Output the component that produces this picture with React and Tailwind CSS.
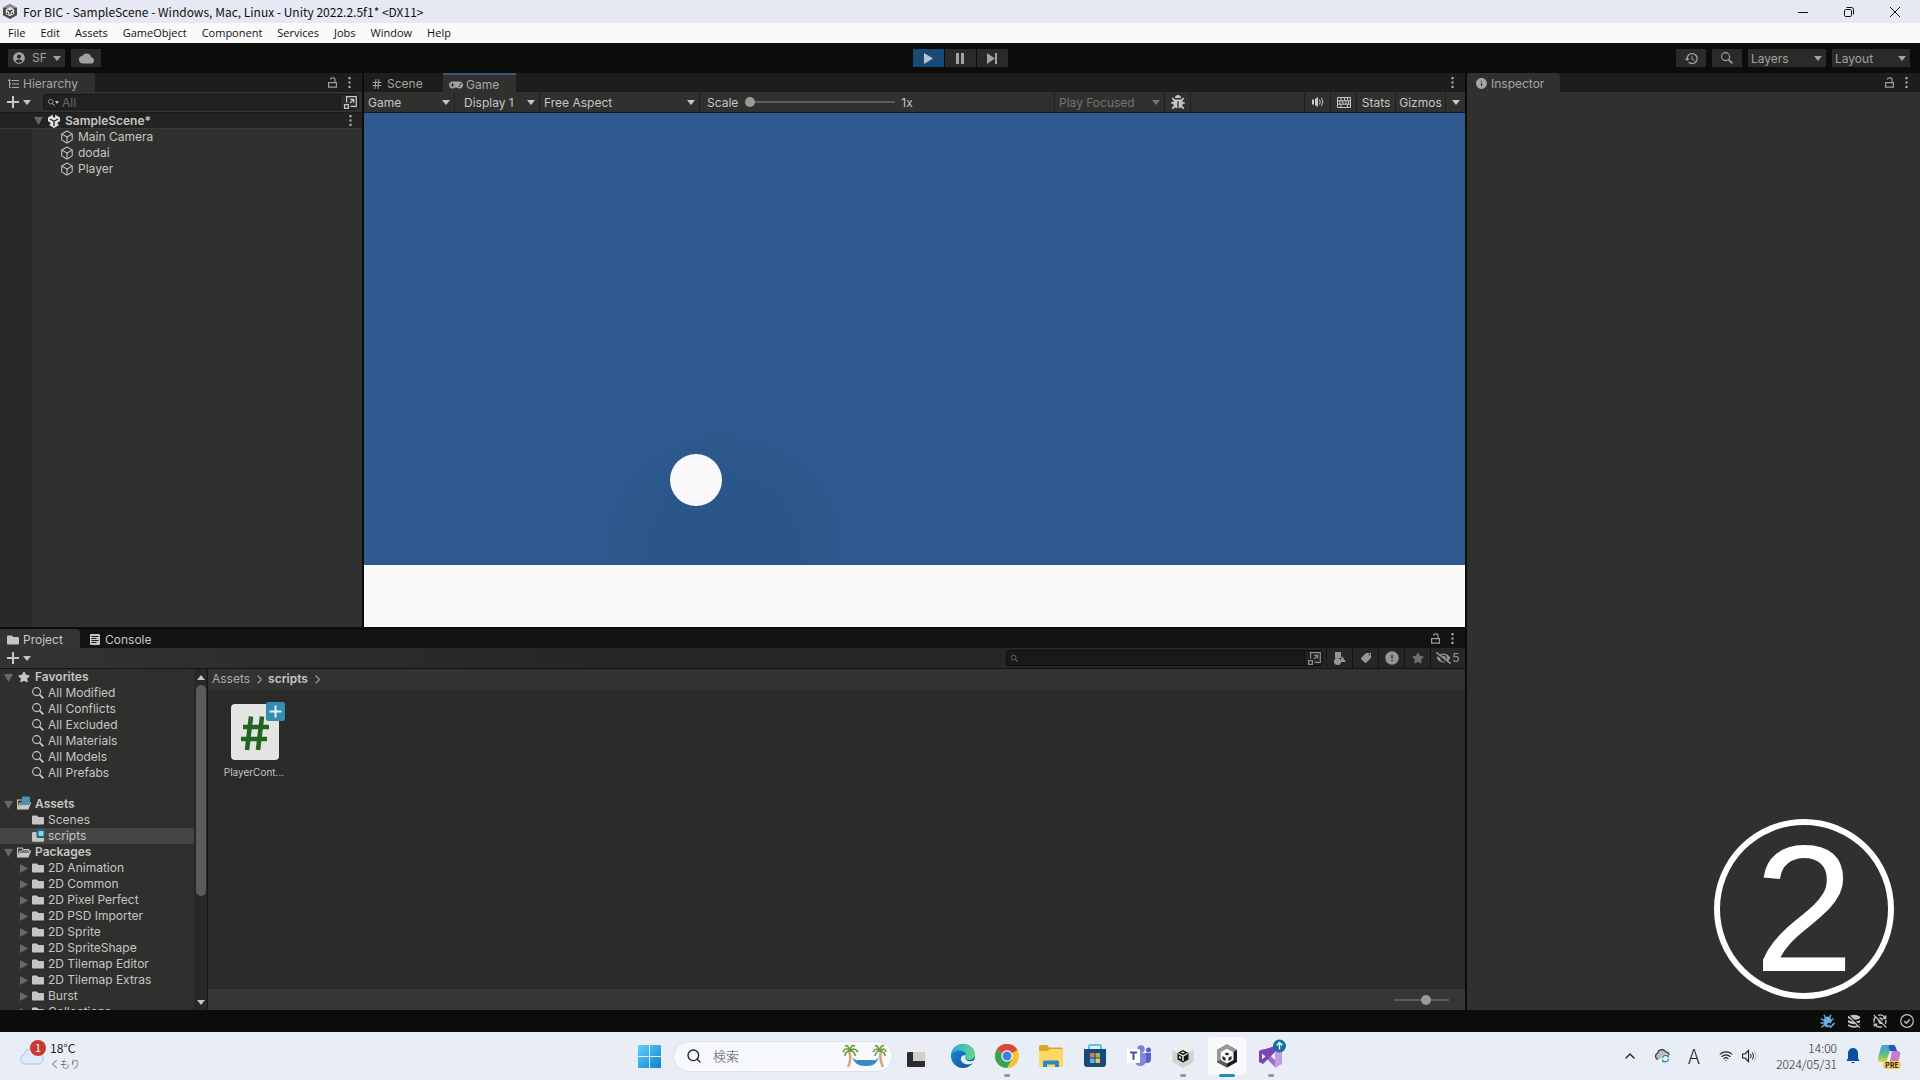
import { FaBug, FaEyeSlash, FaFolder, FaGamepad, FaStar } from 'react-icons/fa'
import { MdAccountCircle, MdCloud, MdError, MdHistory, MdInfo, MdLocalOffer } from 'react-icons/md'
import { Box, ChevronUp, Hash, Search, Wifi } from 'lucide-react'

const menus = ['File', 'Edit', 'Assets', 'GameObject', 'Component', 'Services', 'Jobs', 'Window', 'Help']
const sceneObjects = ['Main Camera', 'dodai', 'Player']
const favorites = ['All Modified', 'All Conflicts', 'All Excluded', 'All Materials', 'All Models', 'All Prefabs']
const packages = [
  '2D Animation',
  '2D Common',
  '2D Pixel Perfect',
  '2D PSD Importer',
  '2D Sprite',
  '2D SpriteShape',
  '2D Tilemap Editor',
  '2D Tilemap Extras',
  'Burst',
  'Collections',
]

function Caret({ className = '' }) {
  return (
    <svg className={`shrink-0 w-2 h-[5px] ${className}`} viewBox="0 0 8 5" fill="currentColor">
      <path d="M0 0h8L4 5z" />
    </svg>
  )
}

function Foldout({ open }) {
  return (
    <svg className="shrink-0 w-[9px] h-[9px] text-[#686866]" viewBox="0 0 9 9" fill="currentColor">
      <path d={open ? 'M0 1h9L4.500 9z' : 'M1 0v9l8-4.500z'} />
    </svg>
  )
}

function Kebab() {
  return (
    <button aria-label="Panel menu" className="w-3 h-4 flex items-center justify-center text-[#b4b4b2]">
      <svg className="w-[3px] h-[11px]" viewBox="0 0 3 11" fill="currentColor">
        <path d="M.5 0h2v2.200h-2zM.5 4.400h2v2.200h-2zM.5 8.800h2V11h-2z" />
      </svg>
    </button>
  )
}

function LockButton() {
  return (
    <button aria-label="Lock panel" className="w-3 h-4 flex items-center justify-center text-[#9c9c9a]">
      <svg className="w-[9px] h-[11px]" viewBox="0 0 9 11" fill="none" stroke="currentColor" strokeWidth="1.200">
        <path d="M.6 5.600h7.800v4.600H.6zM7 5.500V2.600C7 .4 2.600.2 2.400 2.600" />
      </svg>
    </button>
  )
}

function PopoutIcon() {
  return (
    <svg className="w-[13px] h-[13px]" viewBox="0 0 13 13" fill="none" stroke="currentColor" strokeWidth="1.200">
      <path d="M2.600 6.500V.7h9.700v9.700H6.500M.6 8.600h3.800v3.800H.6zM6 7l3.500-3.500M6.200 3.300h3.500v3.500" />
    </svg>
  )
}

function UnityLogo() {
  return (
    <svg className="w-[14px] h-[14px] ml-1 mr-1" viewBox="0 0 14 14">
      <path d="M7 0l6 3.400v7.200L7 14l-6-3.400V3.400z" fill="#e2e2e0" />
      <path d="M7 7.300V12M7 7.300L3 5M7 7.300L11 5" stroke="#232322" strokeWidth="1.300" />
      <path d="M5.800 0h2.400v3L7 3.800 5.800 3zM0 9.200l1-2 2.400 1.200v1.700L1.500 11.500zM14 9.200l-1-2-2.400 1.200v1.700l1.900 1.400z" fill="#232322" />
    </svg>
  )
}

function HierarchyIcon() {
  return (
    <svg className="w-[11px] h-[10px]" viewBox="0 0 11 10" fill="none" stroke="currentColor">
      <path d="M0 1.500h2.500M3.500 1.500H11M4 5H11M4 8.500H11M1.500 0v8.500h1.500M1.500 5H3" />
    </svg>
  )
}

function ConsoleIcon() {
  return (
    <svg className="w-[10px] h-[11px]" viewBox="0 0 10 11">
      <rect width="10" height="11" rx="1" fill="#c4c4c2" />
      <path d="M1.500 2.500h7M1.500 4.500h5M1.500 6.500h7M1.500 8.500h5" stroke="#1c1c1b" />
    </svg>
  )
}

function MagnifierIcon({ className = 'w-3 h-3' }) {
  return (
    <svg className={`shrink-0 ${className}`} viewBox="0 0 12 12" fill="none" stroke="currentColor">
      <circle cx="4.600" cy="4.600" r="4" strokeWidth="1.100" />
      <path d="M7.600 7.600l3.800 3.800" strokeWidth="1.700" />
    </svg>
  )
}

function OpenFolder({ badge }) {
  return (
    <svg className="shrink-0 w-[14px] h-3 overflow-visible" viewBox="0 0 14 12">
      <path d="M.6 11V2h4.500l1 1.500h5.500V5M.6 11L3.200 5h10.200L11 11z" fill="none" stroke="#c6c6c4" strokeWidth="1.200" />
      <path d="M3.500 6.500h9.300L11 11H1z" fill="#c6c6c4" />
      {badge && <rect x="5" y="-1.500" width="8" height="8" rx="1" fill="#4796ab" />}
    </svg>
  )
}

function BadgedFolder() {
  return (
    <svg className="shrink-0 w-3 h-3 overflow-visible" viewBox="0 0 12 12">
      <path d="M0 3.500Q0 2 1 2h3.500L6 3.500h6V11q0 .8-1 .8H1q-1 0-1-.8z" fill="#c6c6c4" />
      <rect x="4.500" y="-1" width="8.500" height="9" rx="1" fill="#24667d" />
      <rect x="6.500" y="1" width="5" height="5" rx="1" fill="#8fd3e2" />
    </svg>
  )
}

function Tab({ icon, label, className }) {
  return (
    <button className={`h-full flex items-center gap-1 pt-[2px] ${className}`}>
      <span className="w-3 flex justify-center">{icon}</span>
      {label}
    </button>
  )
}

function Picker({ label, className, selectClass = 'pl-1' }) {
  return (
    <div className={`h-full flex items-center relative ${className}`}>
      <select aria-label={label} className={`appearance-none bg-transparent w-full h-full pt-px outline-none ${selectClass}`}>
        <option>{label}</option>
      </select>
      <Caret className="absolute right-1 pointer-events-none" />
    </div>
  )
}

const sliderLook =
  'appearance-none bg-transparent [&::-webkit-slider-runnable-track]:h-[2px] [&::-webkit-slider-runnable-track]:bg-[#5c5c5a] [&::-webkit-slider-thumb]:appearance-none [&::-webkit-slider-thumb]:w-[10px] [&::-webkit-slider-thumb]:h-[10px] [&::-webkit-slider-thumb]:-mt-1 [&::-webkit-slider-thumb]:rounded-full [&::-webkit-slider-thumb]:bg-[#999997]'

function TitleBar() {
  return (
    <header className="text-[#101014] shrink-0">
      <div className="h-[23px] pr-[2px] bg-[#e6e8f3] flex items-center">
        <svg className="w-[14px] h-[15px] ml-[3px] mr-[6px]" viewBox="0 0 14 15">
          <path d="M7 0l7 3.700v7.600L7 15l-7-3.700V3.700z" fill="#4a4a4c" />
          <path d="M7 0l7 3.700L7 4.500 0 3.700z" fill="#8b8b8e" />
          <path d="M7 3L11.200 5.300v4.600L7 12.300 2.800 9.900V5.300z" fill="#e2e2e5" />
          <path d="M7 7.500v3M7 7.500L4.500 6M7 7.500L9.500 6M4.500 8.500v1.500M9.500 8.500v1.500" stroke="#2b2b2c" strokeWidth="1.200" />
        </svg>
        <h1 className="font-['Noto_Sans_CJK_JP',sans-serif]">
          For BIC - SampleScene - Windows, Mac, Linux - Unity 2022.2.5f1* &lt;DX11&gt;
        </h1>
        <div className="ml-auto flex items-center">
          <button aria-label="Minimize" className="w-[46px] h-5 flex items-center justify-center">
            <svg className="w-[10px] h-[10px]" viewBox="0 0 10 10" stroke="currentColor"><path d="M0 5.500h10" /></svg>
          </button>
          <button aria-label="Restore" className="w-[46px] h-5 flex items-center justify-center">
            <svg className="w-[10px] h-[10px]" viewBox="0 0 10 10" fill="none" stroke="currentColor">
              <rect x=".5" y="2.500" width="7" height="7" rx="1.200" />
              <path d="M2.500.5H7.500q2 0 2 2v5" />
            </svg>
          </button>
          <button aria-label="Close" className="w-[46px] h-5 flex items-center justify-center">
            <svg className="w-[10px] h-[10px]" viewBox="0 0 10 10" stroke="currentColor"><path d="M0 0l10 10M10 0L0 10" /></svg>
          </button>
        </div>
      </div>
      <nav className="h-5 bg-[#fafafa] flex items-center gap-[15px] pl-2 font-['Open_Sans',sans-serif] text-[11px]">
        {menus.map((name) => <button key={name}>{name}</button>)}
      </nav>
    </header>
  )
}

function MainToolbar() {
  return (
    <div className="h-[30px] shrink-0 bg-[#0c0c0a] grid grid-cols-[1fr_auto_1fr] items-center text-[#a2a2a0]">
      <div className="flex gap-[6px] pl-2">
        <button className="h-[18px] w-[57px] bg-[#2a2a29] flex items-center justify-between px-1">
          <MdAccountCircle className="w-[14px] h-[14px]" />
          SF
          <Caret />
        </button>
        <button aria-label="Cloud" className="h-[18px] w-[30px] bg-[#2a2a29] flex items-center justify-center">
          <MdCloud className="w-[15px] h-[15px]" />
        </button>
      </div>
      <div className="flex gap-px">
        <button aria-label="Play" className="w-[31px] h-[18px] bg-[#184a76] flex items-center justify-center">
          <svg className="w-[9px] h-[11px] text-[#b8c4ce]" viewBox="0 0 9 11" fill="currentColor"><path d="M0 0l9 5.500L0 11z" /></svg>
        </button>
        <button aria-label="Pause" className="w-[31px] h-[18px] bg-[#2a2a29] flex items-center justify-center">
          <svg className="w-2 h-[11px]" viewBox="0 0 8 11" fill="currentColor"><path d="M0 0h3v11H0zM5 0h3v11H5z" /></svg>
        </button>
        <button aria-label="Step" className="w-[31px] h-[18px] bg-[#2a2a29] flex items-center justify-center">
          <svg className="w-[10px] h-[11px]" viewBox="0 0 10 11" fill="currentColor"><path d="M0 0l8 5.500L0 11zM8 0h2v11H8z" /></svg>
        </button>
      </div>
      <div className="flex gap-[6px] justify-end pr-[10px]">
        <button aria-label="History" className="w-[30px] h-[18px] bg-[#2a2a29] flex items-center justify-center">
          <MdHistory className="w-[15px] h-[15px]" />
        </button>
        <button aria-label="Search" className="w-[30px] h-[18px] bg-[#2a2a29] flex items-center justify-center">
          <MagnifierIcon />
        </button>
        <div className="h-[18px] w-[78px] bg-[#2a2a29]"><Picker label="Layers" className="w-full" selectClass="pl-[3px]" /></div>
        <div className="h-[18px] w-[78px] bg-[#2a2a29]"><Picker label="Layout" className="w-full" selectClass="pl-[3px]" /></div>
      </div>
    </div>
  )
}

function Hierarchy() {
  return (
    <section className="w-[362px] shrink-0 flex flex-col bg-[#30302f]">
      <div className="h-[19px] bg-[#1d1d1b] flex items-center">
        <Tab icon={<HierarchyIcon />} label="Hierarchy" className="w-[95px] pl-[7px] bg-[#30302f] rounded-tr-sm text-[#a6a6a4]" />
        <div className="ml-auto flex gap-[5px] pr-[7px]"><LockButton /><Kebab /></div>
      </div>
      <div className="h-[21px] border-b border-[#1c1c1b] flex items-center pl-[7px] pr-[3px]">
        <button aria-label="Add object" className="flex items-center gap-1 mr-3">
          <svg className="w-3 h-3" viewBox="0 0 12 12" stroke="currentColor" strokeWidth="2"><path d="M6 0v12M0 6h12" /></svg>
          <Caret />
        </button>
        <div className="h-4 flex-1 min-w-0 bg-[#212120] border border-[#161615] rounded-[3px] flex items-center pl-1">
          <MagnifierIcon className="w-[7px] h-[7px]" />
          <svg className="w-1 h-[3px]" viewBox="0 0 4 3" fill="currentColor"><path d="M0 0h4L2 3z" /></svg>
          <input aria-label="Search hierarchy" placeholder="All" className="flex-1 min-w-0 h-full pl-[3px] bg-transparent outline-none placeholder:text-[#686866]" />
          <button aria-label="Open in search" className="pl-[3px] pr-px border-l border-[#161615] bg-[#2c2c2b] h-full flex items-center"><PopoutIcon /></button>
        </div>
      </div>
      <div className="flex-1 bg-linear-to-r from-[#292928] from-[32px] to-[#30302f] to-[32px]">
        <div className="h-4 bg-[#232322] border-b border-[#3a3a39] flex items-center pl-[34px] pr-[6px] font-semibold">
          <Foldout open />
          <UnityLogo />
          SampleScene*
          <div className="ml-auto"><Kebab /></div>
        </div>
        <ul>
          {sceneObjects.map((name) => (
            <li key={name} className="h-4 flex items-center gap-1 pl-[60px]">
              <Box className="w-[14px] h-[14px]" strokeWidth={1.8} />
              {name}
            </li>
          ))}
        </ul>
      </div>
    </section>
  )
}

function GameView() {
  return (
    <section className="flex-1 min-w-0 flex flex-col bg-[#30302f]">
      <div className="h-[19px] bg-[#1d1d1b] flex items-center text-[#a6a6a4]">
        <Tab icon={<Hash className="w-3 h-3" />} label="Scene" className="w-[79px] pl-[7px]" />
        <Tab icon={<FaGamepad className="w-[14px] h-[14px] shrink-0" />} label="Game" className="w-[73px] pl-[7px] bg-[#30302f] border-t-2 border-[#38587c]" />
        <div className="ml-auto pr-[7px]"><Kebab /></div>
      </div>
      <div className="h-[21px] border-b border-[#101a28] flex items-center">
        <Picker label="Game" className="w-[91px] border-r border-[#20201f]" />
        <Picker label="Display 1" className="w-[85px] border-r border-[#20201f]" selectClass="pl-[9px]" />
        <Picker label="Free Aspect" className="w-[160px] border-r border-[#20201f]" />
        <label htmlFor="scale" className="px-[7px] pt-px">Scale</label>
        <input id="scale" type="range" min="1" max="10" defaultValue="1" className={`w-[150px] ${sliderLook}`} />
        <span className="pl-[6px] pt-px">1x</span>
        <div className="ml-auto h-full flex items-center">
          <Picker label="Play Focused" className="w-[111px] border-x border-[#20201f] text-[#737371]" />
          <button aria-label="Debug" className="w-[26px] h-full border-r border-[#20201f] flex items-center justify-center">
            <FaBug className="w-[14px] h-[14px]" />
          </button>
          <div className="w-[113px]" />
          <button aria-label="Mute audio" className="w-[26px] h-full border-l border-[#20201f] flex items-center justify-center">
            <svg className="w-3 h-[10px]" viewBox="0 0 12 10">
              <path d="M0 2.500h2v5H0zM3 2l3-2v10L3 8z" fill="currentColor" />
              <path d="M7.500 2.500q1.500 2.500 0 5M9.500 1q2.600 4 0 8" fill="none" stroke="currentColor" />
            </svg>
          </button>
          <button aria-label="Shortcuts" className="w-[26px] h-full border-l border-[#20201f] flex items-center justify-center">
            <svg className="w-[14px] h-[11px]" viewBox="0 0 14 11" fill="none" stroke="currentColor">
              <path d="M.5.5h13v10H.5zM.5 3.800h13M.5 7.200h13M4 .5v3.300M7.500.5v3.300M10.500.5v3.300M2.800 3.800v3.400M5.800 3.800v3.400M9 3.800v3.400M11.500 3.800v3.400M4 7.200v3.300M10.500 7.200v3.300" />
            </svg>
          </button>
          <button className="w-[39px] h-full pt-px border-l border-[#20201f]">Stats</button>
          <button className="w-[51px] h-full pt-px border-x border-[#20201f]">Gizmos</button>
          <button aria-label="Gizmo options" className="w-[19px] h-full flex items-center justify-center"><Caret /></button>
        </div>
      </div>
      <div className="flex-1 flex flex-col justify-end relative bg-[#305a8f] bg-[radial-gradient(circle_at_360px_440px,#285486_0px,#2b568a_70px,#305a8f_140px)]">
        <div className="absolute left-[306px] bottom-[121px] w-[52px] h-[52px] rounded-full bg-[#f9f9fb]" />
        <div className="h-[62px] bg-[#f9f9fa]" />
      </div>
    </section>
  )
}

function TreeScrollbar() {
  return (
    <div className="w-[13px] shrink-0 bg-[#272726] flex flex-col items-center">
      <button aria-label="Scroll up" className="h-4 flex items-center"><Caret className="rotate-180" /></button>
      <div className="w-[10px] h-[211px] rounded-full bg-[#5b5b5a]" />
      <button aria-label="Scroll down" className="h-4 mt-auto flex items-center"><Caret /></button>
    </div>
  )
}

function ProjectTree() {
  return (
    <div className="flex w-[208px] shrink-0 border-r border-[#151514]">
      <ul className="flex-1 min-w-0 overflow-hidden whitespace-nowrap">
        <li className="h-4 flex items-center pl-1 gap-[5px] font-semibold">
          <Foldout open />
          <FaStar className="w-3 h-3" />
          Favorites
        </li>
        {favorites.map((name) => (
          <li key={name} className="h-4 flex items-center gap-1 pl-8"><MagnifierIcon />{name}</li>
        ))}
        <li className="h-[15px]" />
        <li className="h-4 flex items-center pl-1 gap-[4px] font-semibold"><Foldout open /><OpenFolder badge />Assets</li>
        <li className="h-4 flex items-center gap-1 pl-8"><FaFolder className="w-3 h-3" />Scenes</li>
        <li className="h-4 flex items-center gap-1 pl-8 bg-[#454544]"><BadgedFolder />scripts</li>
        <li className="h-4 flex items-center pl-1 gap-[4px] font-semibold"><Foldout open /><OpenFolder />Packages</li>
        {packages.map((name) => (
          <li key={name} className="h-4 flex items-center gap-1 pl-[19px]">
            <Foldout />
            <FaFolder className="w-3 h-3" />
            {name}
          </li>
        ))}
      </ul>
      <TreeScrollbar />
    </div>
  )
}

function Crumb({ label, className = '' }) {
  return (
    <a href="#" className={`flex items-center gap-[7px] ${className}`}>
      {label}
      <svg className="w-[5px] h-[9px] text-[#8c8c8a]" viewBox="0 0 5 9" fill="none" stroke="currentColor" strokeWidth="1.500"><path d="M.5.5l4 4-4 4" /></svg>
    </a>
  )
}

function Project() {
  const filters = [
    {
      name: 'Filter by type',
      icon: (
        <svg className="w-3 h-[13px]" viewBox="0 0 12 13" fill="currentColor">
          <path d="M1 0h6v6H1zM8 4l4 6H6z" />
          <circle cx="3.500" cy="9.500" r="3.500" />
        </svg>
      ),
    },
    { name: 'Filter by label', icon: <MdLocalOffer className="w-3 h-3 rotate-90" /> },
    { name: 'Filter by log', icon: <MdError className="w-4 h-4" /> },
    { name: 'Save search', icon: <FaStar className="w-3 h-3 text-[#6f6f6d]" /> },
  ]

  return (
    <section className="h-[381px] shrink-0 flex flex-col bg-[#2f2f2e]">
      <div className="h-[19px] shrink-0 bg-[#131313] flex items-center">
        <Tab icon={<FaFolder className="w-3 h-3" />} label="Project" className="w-20 pl-[7px] bg-[#333332] rounded-tr-sm" />
        <Tab icon={<ConsoleIcon />} label="Console" className="pl-[9px]" />
        <div className="ml-auto flex gap-[5px] pr-[7px]"><LockButton /><Kebab /></div>
      </div>
      <div className="h-[21px] shrink-0 border-b border-[#131312] bg-linear-to-r from-[#333332] to-[#262626] to-40% flex items-center pl-[7px]">
        <button aria-label="Create asset" className="flex items-center gap-1">
          <svg className="w-3 h-3" viewBox="0 0 12 12" stroke="currentColor" strokeWidth="2"><path d="M6 0v12M0 6h12" /></svg>
          <Caret />
        </button>
        <div className="ml-auto mr-[3px] h-4 w-[317px] bg-[#191919] border border-[#0e0e0e] rounded-[3px] flex items-center pl-1 text-[#8c8c8a]">
          <MagnifierIcon className="w-[7px] h-[7px]" />
          <input aria-label="Search assets" className="flex-1 min-w-0 h-full pl-1 bg-transparent outline-none" />
          <button aria-label="Open in search" className="pl-[3px] pr-px border-l border-[#0e0e0e] bg-[#222] h-full flex items-center"><PopoutIcon /></button>
        </div>
        <div className="h-full flex text-[#969694]">
          {filters.map((filter) => (
            <button key={filter.name} aria-label={filter.name} className="w-[26px] border-l border-[#151515] flex items-center justify-center">
              {filter.icon}
            </button>
          ))}
          <button aria-label="Hidden packages" className="w-[35px] border-l border-[#151515] flex items-center justify-center gap-px">
            <FaEyeSlash className="w-[15px] h-3" />5
          </button>
        </div>
      </div>
      <div className="flex-1 min-h-0 flex">
        <ProjectTree />
        <div className="flex-1 min-w-0 flex flex-col bg-[#2a2a29]">
          <nav className="h-[21px] pb-px bg-[#323232] flex items-center gap-[6px] pl-1">
            <Crumb label="Assets" className="text-[#acacaa]" />
            <Crumb label="scripts" className="font-semibold" />
          </nav>
          <div className="flex-1 px-[15px] pt-[12px]">
            <figure className="w-[62px] flex flex-col items-center gap-1">
              <svg className="w-[54px] h-[58px] ml-2" viewBox="0 0 54 58">
                <rect x="0" y="2" width="48" height="56" rx="4" fill="#e4e4e2" />
                <path d="M20 14.500l-4 33.500M31 14.500L27 48M12 25h26M10 37h26" stroke="#21651f" strokeWidth="4.600" />
                <rect x="35" y="0" width="19" height="19" rx="2" fill="#338daf" />
                <path d="M44.500 3.500v12M38.500 9.500h12" stroke="#e6f2f6" strokeWidth="2" />
              </svg>
              <figcaption className="text-[10px] leading-4">PlayerCont...</figcaption>
            </figure>
          </div>
          <div className="h-[21px] bg-[#363635] flex items-center justify-end pr-4">
            <input aria-label="Icon size" type="range" defaultValue="60" className={`w-[55px] ${sliderLook}`} />
          </div>
        </div>
      </div>
    </section>
  )
}

function Inspector() {
  return (
    <section className="w-[453px] shrink-0 flex flex-col bg-[#30302e]">
      <div className="h-[19px] bg-[#1d1d1b] flex items-center">
        <Tab icon={<MdInfo className="w-[13px] h-[13px] shrink-0" />} label="Inspector" className="w-[93px] pl-[8px] bg-[#30302e] rounded-t-sm text-[#a6a6a4]" />
        <div className="ml-auto flex gap-[5px] pr-2"><LockButton /><Kebab /></div>
      </div>
      <div className="flex-1 flex items-end justify-end pr-[26px] pb-[11px]">
        <div className="w-[180px] h-[180px] rounded-full border-6 border-white text-white flex items-center justify-center font-['Liberation_Sans',sans-serif] text-[180px] leading-none">
          2
        </div>
      </div>
    </section>
  )
}

function StatusBar() {
  return (
    <div className="h-[22px] shrink-0 bg-[#0c0c0b] flex items-center justify-end text-[#c2c2c0]">
      <button aria-label="Debugger" className="w-[26px] flex justify-center text-[#6aaee6]">
        <svg className="w-[15px] h-[15px]" viewBox="0 0 15 15" fill="none" stroke="currentColor">
          <path d="M5 3.500q2.500-2 5 0l2 3.500-1.500 2.500-2-1L7 10.500 9 13q-3 1-5-1.500-1.500-4 1-8z" fill="currentColor" stroke="none" />
          <path d="M5.500 4L4 .8M9.500 4L11 .8M4 6.500L1 4.500M3.500 9H.5M4 11l-2.500 2.500M11 6.500l2.500-2" strokeWidth="1.400" />
          <path d="M8.500 11l2 2.200L14.500 9" strokeWidth="1.600" />
        </svg>
      </button>
      <button aria-label="Cache server" className="w-[27px] flex justify-center">
        <svg className="w-[14px] h-[14px]" viewBox="0 0 14 14">
          <path d="M1 2.500Q7-1 13 2.500v1.700Q7 7.500 1 4.200zM1 6q6 3.500 12 0v2.500q-6 3.500-12 0zM1 10.200q6 3.500 12 0v1.800q-6 3.500-12 0z" fill="currentColor" />
          <path d="M2.500 2l11 11" stroke="#0c0c0b" strokeWidth="1.300" />
          <path d="M1.500 2.500l11.500 11.500" stroke="currentColor" strokeWidth="1.100" />
        </svg>
      </button>
      <button aria-label="Auto refresh" className="w-[26px] flex justify-center">
        <svg className="w-[14px] h-[14px]" viewBox="0 0 14 14" fill="none" stroke="currentColor" strokeWidth="1.400">
          <path d="M1.200 8.500A6 6 0 0 1 2.500 3M5 1.300a6 6 0 0 1 7.300 3.200M12.900 6a6 6 0 0 1-1.400 5M9 12.700A6 6 0 0 1 2 10.500M12.700 1.500v3H9.700M1.300 12.500v-2.300h3" />
          <path d="M4.500 6a2.600 2.600 0 1 1 4.600 1.600V10H6.500z" fill="currentColor" stroke="none" />
          <path d="M1.800.5l12 12" stroke="#0c0c0b" />
          <path d="M.8 1l12.500 12.500" strokeWidth="1.200" />
        </svg>
      </button>
      <button aria-label="Progress" className="w-[27px] flex justify-center">
        <svg className="w-[14px] h-[14px]" viewBox="0 0 14 14" fill="none" stroke="currentColor" strokeWidth="1.200">
          <circle cx="7" cy="7" r="6.300" />
          <path d="M4.300 7.200l2 2 3.500-3.800" strokeWidth="1.500" />
        </svg>
      </button>
    </div>
  )
}

function TaskIcon({ label, mark, active, children }) {
  return (
    <button aria-label={label} className="w-11 h-12 flex items-center justify-center relative">
      <span className={`w-[38px] h-[38px] rounded flex items-center justify-center ${active ? 'bg-[#f8f9fc]' : ''}`}>{children}</span>
      {mark && <span className={`absolute bottom-[3px] h-[3px] rounded-full ${active ? 'w-4 bg-[#2786c8]' : 'w-[6px] bg-[#909398]'}`} />}
    </button>
  )
}

function Taskbar() {
  return (
    <footer className="h-12 shrink-0 bg-[#e9edf5] grid grid-cols-[1fr_auto_1fr] items-center font-['Noto_Sans_CJK_JP',sans-serif] text-[12px] leading-4 text-[#1f2023]">
      <button className="flex items-center gap-1 pl-[18px] text-left justify-self-start">
        <svg className="w-[28px] h-[32px]" viewBox="0 0 28 32">
          <path d="M6 24a5 5 0 0 1 0-9.500 7 7 0 0 1 13-1.500 5.500 5.500 0 0 1 1.500 11z" fill="#dfeaf8" stroke="#a9c4e6" />
          <circle cx="20" cy="8" r="8" fill="#c83c30" />
          <text x="20" y="12" textAnchor="middle" fontSize="11" fill="#fff">1</text>
        </svg>
        <span>
          18°C
          <span className="block text-[10px] font-light text-[#3f4146]">くもり</span>
        </span>
      </button>
      <div className="flex items-center">
        <TaskIcon label="Start">
          <svg className="w-[23px] h-[23px]" viewBox="0 0 23 23">
            <linearGradient id="win" x1="0" y1="0" x2="1" y2="1"><stop stopColor="#5fd2f8" /><stop offset="1" stopColor="#0d7fd0" /></linearGradient>
            <path d="M1 0h10v11H0V1q0-1 1-1zM12 0h10q1 0 1 1v10H12zM0 12h11v11H1q-1 0-1-1zM12 12h11v10q0 1-1 1H12z" fill="url(#win)" />
          </svg>
        </TaskIcon>
        <label className="ml-[2px] mr-1 w-[220px] h-[31px] rounded-full bg-[#f7f9fc] border border-[#dde1e9] flex items-center gap-[11px] pl-3 pr-1">
          <Search className="w-4 h-4 shrink-0" />
          <input aria-label="検索" placeholder="検索" className="flex-1 min-w-0 bg-transparent outline-none text-[13px] font-light placeholder:text-[#505257]" />
          <svg className="w-[46px] h-[24px] shrink-0" viewBox="0 0 46 24" fill="none">
            <path d="M7 7q3 8-1 16M39 7q-2 8 2 16" stroke="#d3a678" strokeWidth="2.500" />
            <path d="M8 7Q4 2 1 8M8 7Q6 0 3 2M8 7q1-7 5-5M8 7q5-4 8 1M8 7q5 0 5 5M8 7q-5 0-5 5M38 7q-4-4-7 1M38 7q-2-6-5-5M38 7q1-7 4-5M38 7q5-4 6 1M38 7q5 1 5 5M38 7q-4 0-5 5" stroke="#6f9c3c" strokeWidth="1.700" />
            <path d="M10 13q3 4 6 3h15q4 1 6-4-2 11-14 10-10 0-13-9z" fill="#3b86c8" />
          </svg>
        </label>
        <TaskIcon label="Task view">
          <svg className="w-6 h-6" viewBox="0 0 24 24">
            <rect x="0" y="8" width="18" height="15" rx="1" fill="#2c2c2e" />
            <rect x="6" y="1" width="18" height="16" rx="1" fill="#ededed" fillOpacity=".92" />
            <path d="M6 8h12v9H6z" fill="#cfcfcf" />
          </svg>
        </TaskIcon>
        <TaskIcon label="Edge">
          <svg className="w-6 h-6" viewBox="0 0 24 24">
            <linearGradient id="edgeTop" x1="0" x2="1"><stop stopColor="#2ba8e2" /><stop offset="1" stopColor="#66d984" /></linearGradient>
            <linearGradient id="edgeLow" x1="0" y1="0" x2="1" y2="1"><stop stopColor="#1b8fe0" /><stop offset="1" stopColor="#0d4c94" /></linearGradient>
            <circle cx="12" cy="12" r="12" fill="url(#edgeLow)" />
            <path d="M0 11C1 4 6 0 12 0c7 0 12 5 12 10 0 4-3 6-6 6-3 0-4-1.500-4-2.500 0-1 1-1 1-2.500C15 8.500 12 6.500 8.500 6.500 4.500 6.500 1.500 8 0 11z" fill="url(#edgeTop)" />
            <path d="M14 13.500c0 2 2 3.700 5 3.700 1.700 0 3-.5 3.800-1L24 15v5l-2-1c-2 1.500-8 2.500-11-1-2-2.500-1-5.500 1-6.500 1-.5 3-.4 3 0 0 1-1 1-1 2z" fill="#e9edf5" />
          </svg>
        </TaskIcon>
        <TaskIcon label="Chrome" mark>
          <svg className="w-6 h-6" viewBox="0 0 24 24">
            <circle cx="12" cy="12" r="12" fill="#f6c631" />
            <path d="M12 12L1.600 6A12 12 0 0 1 22.400 6z" fill="#da4a3c" />
            <path d="M1.600 6A12 12 0 0 0 12 24l5.200-9z" fill="#35a456" />
            <path d="M1.600 6A12 12 0 0 1 22.400 6H12z" fill="#da4a3c" />
            <circle cx="12" cy="12" r="5.700" fill="#fff" />
            <circle cx="12" cy="12" r="4.500" fill="#3f7fe0" />
          </svg>
        </TaskIcon>
        <TaskIcon label="Explorer">
          <svg className="w-6 h-[22px]" viewBox="0 0 24 22">
            <path d="M0 2q0-2 2-2h6l2 2.500h12q2 0 2 2V8H0z" fill="#e0a526" />
            <path d="M0 6h9l2-2h12q1 0 1 1v15q0 2-2 2H2q-2 0-2-2z" fill="#fbd964" />
            <path d="M4 22v-5q0-1.500 1.500-1.500h13Q20 15.500 20 17v5h-4v-2.500H8V22z" fill="#2c87c9" />
          </svg>
        </TaskIcon>
        <TaskIcon label="Store">
          <svg className="w-6 h-6" viewBox="0 0 24 24">
            <path d="M6 6V2.500Q6 1 7.500 1h9Q18 1 18 2.500V6" fill="none" stroke="#5cc3e8" strokeWidth="2" />
            <path d="M1 5h22v15q0 3-3 3H4q-3 0-3-3z" fill="#164a7c" />
            <path d="M7 9h4.500v4.500H7z" fill="#e8715a" /><path d="M12.500 9H17v4.500h-4.500z" fill="#93c159" />
            <path d="M7 14.500h4.500V19H7z" fill="#5ab6e6" /><path d="M12.500 14.500H17V19h-4.500z" fill="#f2c64d" />
          </svg>
        </TaskIcon>
        <TaskIcon label="Teams">
          <svg className="w-[26px] h-6" viewBox="0 0 26 24">
            <circle cx="15" cy="5" r="3.700" fill="#7a80d8" /><circle cx="22.500" cy="6" r="2.500" fill="#5a61c4" />
            <path d="M18 9h7v6q0 4-4 4h-3z" fill="#5a61c4" />
            <path d="M9 9h11v7q0 6-6 6-5 0-5-6z" fill="#8287dc" />
            <rect x="1" y="5" width="13" height="14" rx="1" fill="#fff" />
            <path d="M4 8.500h7M7.500 8.500V16" stroke="#4b50a8" strokeWidth="2" />
          </svg>
        </TaskIcon>
        <TaskIcon label="Unity Hub" mark>
          <svg className="w-[22px] h-[24px]" viewBox="0 0 22 24">
            <path d="M11 0l10.500 6v12L11 24 .5 18V6z" fill="#d2d2d2" />
            <path d="M11 0l10.500 6L11 12 .5 6z" fill="#efefef" />
            <path d="M11 6l5.500 3v6.500L11 18.500l-5.500-3V9z" fill="#161616" />
            <path d="M11 12v5M11 12L6.500 9.500M11 12l4.500-2.500" stroke="#efefef" strokeWidth="1.400" />
            <path d="M7 12l2 1v2L7 14zM11 7.500l2 1-2 1-2-1z" fill="#efefef" />
          </svg>
        </TaskIcon>
        <TaskIcon label="Unity" mark active>
          <svg className="w-[22px] h-6" viewBox="0 0 22 24">
            <path d="M11 .5l10 5.500v12l-10 5.500L1 18V6z" fill="#1c1c1c" />
            <path d="M11 .5L21 6l-3.500 2L11 4.500 4.500 8v8L1 18V6z" fill="#9a9a9a" />
            <path d="M1 18l3.500-2 6.500 3.500v4z" fill="#5d5d5d" />
            <path d="M11 4.500L17.500 8v8L11 19.500 4.500 16V8z" fill="#f6f6f6" />
            <path d="M11 11.500l-2.500-1.500L11 8.500l2.500 1.500zM6.500 12l3 1.700V17l-3-1.700zM15.500 12l-3 1.700V17l3-1.700z" fill="#242424" />
          </svg>
        </TaskIcon>
        <TaskIcon label="Visual Studio" mark>
          <svg className="w-[28px] h-[28px] overflow-visible" viewBox="0 0 28 28">
            <path d="M2 9l4-2 14 13-2 5z" fill="#9b6bd0" />
            <path d="M2 9v11l4 2L20 8l-2-4z" fill="#7546b4" />
            <path d="M5 11.500l3.500 3-3.500 3z" fill="#e9edf5" />
            <path d="M18 4l7 3v15l-7 4z" fill="#c29ae8" />
            <circle cx="22.500" cy="4" r="6.500" fill="#17709f" />
            <path d="M22.500 7.500v-7M19.800 3.200L22.500.5l2.700 2.700" fill="none" stroke="#fff" strokeWidth="1.400" />
          </svg>
        </TaskIcon>
      </div>
      <div className="flex items-center justify-end pr-[19px]">
        <button aria-label="Hidden icons" className="w-8 flex justify-center"><ChevronUp className="w-4 h-4" strokeWidth={2} /></button>
        <button aria-label="OneDrive" className="w-8 flex justify-center">
          <svg className="w-4 h-[14px]" viewBox="0 0 16 14" fill="none">
            <path d="M4 10.500A3.500 3.500 0 0 1 3.500 4a4.500 4.500 0 0 1 8-1.500A4 4 0 0 1 15 6" fill="#b9bbbd" stroke="#303236" strokeWidth="1.200" />
            <circle cx="11.500" cy="9.500" r="4.500" fill="#e9edf5" />
            <path d="M8.500 9a3 3 0 0 1 5.500-1.300V6M14.500 10A3 3 0 0 1 9 11.500V13.300" stroke="#1f7fae" strokeWidth="1.200" />
          </svg>
        </button>
        <button className="w-8 text-[20px] leading-6 font-light">A</button>
        <button aria-label="Network" className="w-8 flex justify-center"><Wifi className="w-[14px] h-[14px]" strokeWidth={2} /></button>
        <button aria-label="Volume" className="w-4 flex justify-center">
          <svg className="w-4 h-[14px]" viewBox="0 0 16 14" fill="none" stroke="currentColor">
            <path d="M.5 5h2.500L6.500 1.500v11L3 9H.5z" strokeWidth="1.200" />
            <path d="M8.500 5q1.200 2 0 4M10.500 3.500q2 3.500 0 7" />
            <path d="M12.500 2q3 5 0 10" stroke="#b9bec8" />
          </svg>
        </button>
        <button className="w-[79px] text-right font-light">
          14:00
          <span className="block">2024/05/31</span>
        </button>
        <button aria-label="Notifications" className="w-8 flex justify-center">
          <svg className="w-[14px] h-4" viewBox="0 0 14 16" fill="#0a4fa5"><path d="M7 0a5 5 0 0 1 5 5v5l1.500 3H.5L2 10V5a5 5 0 0 1 5-5zM5 14h4q-2 2.500-4 0z" /></svg>
        </button>
        <button aria-label="Copilot preview" className="ml-2 w-6 h-[26px] relative">
          <svg className="w-6 h-6" viewBox="0 0 24 24">
            <linearGradient id="copA" x1="0" y1="0" x2="0" y2="1"><stop stopColor="#37a0e8" /><stop offset=".6" stopColor="#63c37a" /><stop offset="1" stopColor="#f0cf45" /></linearGradient>
            <linearGradient id="copB" x1="0" y1="0" x2="0" y2="1"><stop stopColor="#b57be8" /><stop offset="1" stopColor="#ee7a8c" /></linearGradient>
            <path d="M6 1h10q2 0 2.500 2L20 7h-7L9 18H4q-4 0-3-4L4 3q.5-2 2-2z" fill="url(#copA)" />
            <path d="M12 1h4q2 0 2.500 2L20 7h-7q-2-4-1-6z" fill="#2456b8" />
            <path d="M15 7h5q4 0 3 4l-2 8q-.5 3-3 3H9q3 0 4-5l1-5q.3-3 1-5z" fill="url(#copB)" />
          </svg>
          <span className="absolute left-[6px] bottom-0 px-[2px] rounded-sm bg-[#f8cf5c] text-[7px] leading-[8px] font-bold">PRE</span>
        </button>
      </div>
    </footer>
  )
}

export default function App() {
  return (
    <div className="h-screen flex flex-col overflow-hidden bg-[#0b0b0a] font-[Inter,sans-serif] text-[12px] leading-4 text-[#c6c6c4]">
      <TitleBar />
      <MainToolbar />
      <main className="flex-1 min-h-0 flex gap-[2px]">
        <div className="flex-1 min-w-0 flex flex-col gap-[2px]">
          <div className="flex-1 min-h-0 flex gap-[2px]">
            <Hierarchy />
            <GameView />
          </div>
          <Project />
        </div>
        <Inspector />
      </main>
      <StatusBar />
      <Taskbar />
    </div>
  )
}
